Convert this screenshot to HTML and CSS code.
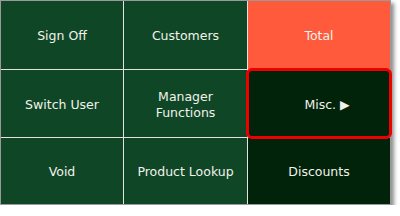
FILE: index.html
```html
<!DOCTYPE html>
<html>
<head>
<meta charset="utf-8">
<link rel="stylesheet" href="styles.css">
</head>
<body>
<div class="pad">
  <div class="key">Sign Off</div>
  <div class="key">Customers</div>
  <div class="key total">Total</div>
  <div class="key">Switch User</div>
  <div class="key">Manager<br>Functions</div>
  <div class="key dark selected">Misc. &#9654;</div>
  <div class="key">Void</div>
  <div class="key">Product Lookup</div>
  <div class="key dark">Discounts</div>
</div>
</body>
</html>
```
FILE: styles.css
```css
html, body {
  margin: 0;
  padding: 0;
  background: #ffffff;
}
.pad {
  display: grid;
  grid-template-columns: 122px 123px 142px;
  grid-template-rows: 68px 67px 66px;
  gap: 1px;
  width: 389px;
  border: 1px solid #9a9a9a;
  background: #e2e2e2;
  box-shadow: 3px 3px 4px rgba(0, 0, 0, 0.45);
  font-family: "DejaVu Sans", Verdana, sans-serif;
  font-size: 12.5px;
}
.key {
  display: flex;
  align-items: center;
  justify-content: center;
  text-align: center;
  line-height: 16px;
  padding-top: 2px;
  background: #0f4726;
  color: #f2f2ec;
}
.total {
  background: #ff5a3c;
}
.dark {
  background: #002309;
}
.selected {
  position: relative;
  z-index: 1;
  padding-left: 16px;
  outline: 3px solid #ee0000;
  outline-offset: -1px;
  border-radius: 4px;
}
```
